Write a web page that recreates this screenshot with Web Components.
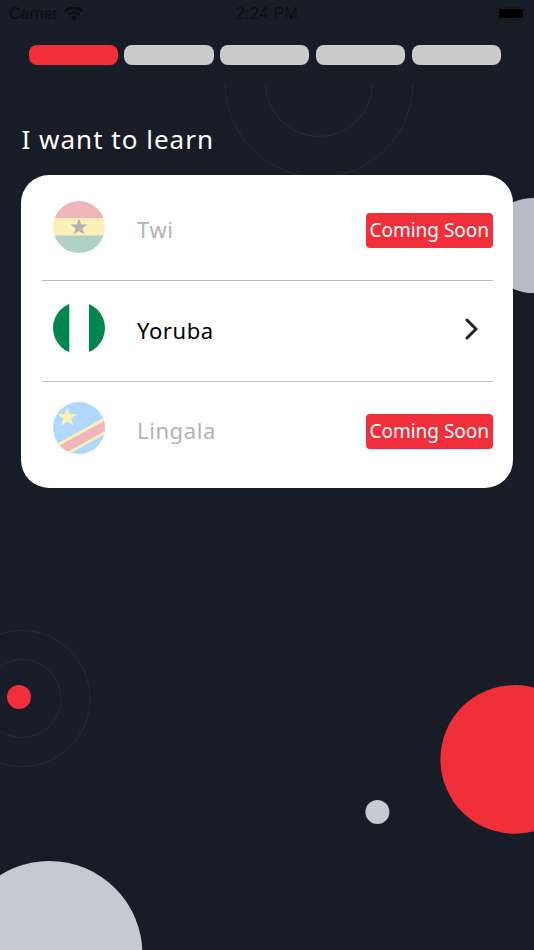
<!DOCTYPE html>
<html>
<head>
<meta charset="utf-8">
<title>I want to learn</title>
<style>
  html, body { margin: 0; padding: 0; background: #181c26; }
</style>
</head>
<body>
<learn-screen>
  <status-bar></status-bar>
  <progress-steps steps="5" active="0"></progress-steps>
  <h-title>I want to learn</h-title>
  <language-card>
    <language-row name="Twi" flag="ghana" soon></language-row>
    <language-row name="Yoruba" flag="nigeria"></language-row>
    <language-row name="Lingala" flag="congo" soon></language-row>
  </language-card>
</learn-screen>

<script>
class LearnScreen extends HTMLElement {
  constructor() {
    super();
    this.attachShadow({mode: 'open'}).innerHTML = `
      <style>
        :host { display: block; position: relative; width: 534px; height: 950px; overflow: hidden; background: #181c26; font-family: "Noto Sans", sans-serif; }
        .bg { position: absolute; left: 0; top: 0; width: 534px; height: 950px; }
        .content { position: relative; display: flex; flex-direction: column; }
      </style>
      <svg class="bg" viewBox="0 0 534 950">
        <g fill="none" stroke="#262a34" stroke-width="1">
          <path d="M225 83a94 94 0 0 0 188 0"/>
          <path d="M265.5 83a53.5 53.5 0 0 0 107 0"/>
          <circle cx="22" cy="698.5" r="68"/>
          <circle cx="22" cy="698.5" r="39"/>
        </g>
        <circle cx="533" cy="245.5" r="47.5" fill="#b7bbc5"/>
        <circle cx="19" cy="697" r="12" fill="#f02f3a"/>
        <circle cx="514.7" cy="759.4" r="74.3" fill="#f02f3a"/>
        <circle cx="377.4" cy="812" r="12" fill="#c5c9d1"/>
        <circle cx="49.4" cy="954" r="93" fill="#c5c9d1"/>
      </svg>
      <div class="content"><slot></slot></div>
    `;
  }
}
customElements.define('learn-screen', LearnScreen);

class StatusBar extends HTMLElement {
  constructor() {
    super();
    this.attachShadow({mode: 'open'}).innerHTML = `
      <style>
        :host { display: flex; align-items: center; justify-content: space-between; position: relative; height: 27px; padding: 0 7px 0 9px; color: #0c0e13; font: 16px "Liberation Sans", sans-serif; }
        .left { display: flex; align-items: center; gap: 6px; }
        .time { position: absolute; left: 0; right: 0; text-align: center; letter-spacing: .4px; }
        svg { display: block; }
      </style>
      <div class="left">
        <span>Carrier</span>
        <svg width="20" height="14" viewBox="0 0 18 13"><path fill="#0c0e13" d="M9 13 6 9.6a4.4 4.4 0 0 1 6 0zM4.4 8 2.9 6.3a9 9 0 0 1 12.2 0L13.6 8a6.8 6.8 0 0 0-9.2 0zM1.6 4.9 0 3.2a13.2 13.2 0 0 1 18 0l-1.6 1.7a11 11 0 0 0-14.8 0z"/></svg>
      </div>
      <span class="time">2:24 PM</span>
      <svg width="30" height="13" viewBox="0 0 30 13"><rect x=".5" y=".5" width="27" height="12" rx="3.5" fill="none" stroke="#0c0e13" stroke-opacity=".35"/><rect x="2" y="2" width="24" height="9" rx="2" fill="#000"/><path d="M28.5 4.5c.8.3 1.3 1.1 1.3 2s-.5 1.7-1.3 2z" fill="#0c0e13" fill-opacity=".5"/></svg>
    `;
  }
}
customElements.define('status-bar', StatusBar);

class ProgressSteps extends HTMLElement {
  constructor() {
    super();
    const n = +this.getAttribute('steps');
    const active = +this.getAttribute('active');
    let bars = '';
    for (let i = 0; i < n; i++) bars += `<div class="bar${i == active ? ' on' : ''}"></div>`;
    this.attachShadow({mode: 'open'}).innerHTML = `
      <style>
        :host { display: flex; gap: 6.5px; margin: 18px 33px 0 28.5px; }
        .bar { flex: 1; height: 19.5px; border-radius: 8px; background: #cbcbcb; }
        .bar.on { background: #f02f3a; }
      </style>
      ${bars}
    `;
  }
}
customElements.define('progress-steps', ProgressSteps);

class HTitle extends HTMLElement {
  constructor() {
    super();
    this.attachShadow({mode: 'open'}).innerHTML = `
      <style>
        :host { display: block; margin: 55px 0 0 21.5px; height: 38px; line-height: 38px; color: #fff; font-size: 26px; letter-spacing: 1px; }
      </style>
      <slot></slot>
    `;
  }
}
customElements.define('h-title', HTitle);

class LanguageCard extends HTMLElement {
  constructor() {
    super();
    this.attachShadow({mode: 'open'}).innerHTML = `
      <style>
        :host { display: flex; flex-direction: column; width: 492px; height: 313px; margin: 17px 0 0 21px; padding: 6px 20.5px; box-sizing: border-box; background: #fff; border-radius: 28px; }
        ::slotted(language-row:not(:last-child)) { border-bottom: 1px solid #bdbdbd; }
      </style>
      <slot></slot>
    `;
  }
}
customElements.define('language-card', LanguageCard);

const FLAGS = {
  ghana: `
    <rect width="52" height="17" fill="#ce1126"/><rect y="17" width="52" height="17.4" fill="#fcd116"/><rect y="34.4" width="52" height="17.6" fill="#006b3f"/>
    <polygon fill="#000" points="26,17.5 28.1,23.6 34.6,23.6 29.4,27.5 31.3,33.6 26,29.9 20.7,33.6 22.6,27.5 17.4,23.6 23.9,23.6"/>`,
  nigeria: `
    <rect width="52" height="52" fill="#fff"/><rect width="16.3" height="52" fill="#008751"/><rect x="36" width="16" height="52" fill="#008751"/>`,
  congo: `
    <rect width="52" height="52" fill="#007fff"/>
    <polygon fill="#f7d618" points="0,44 52,15.3 52,32 0,61"/>
    <polygon fill="#ce1021" points="0,47 52,18.5 52,29 0,58"/>
    <polygon fill="#f7d618" points="14.3,5 16.7,12 24.3,12 18.2,16.5 20.5,24 14.3,19.5 8.1,24 10.4,16.5 4.3,12 11.9,12"/>`
};

class LanguageRow extends HTMLElement {
  constructor() {
    super();
    const soon = this.hasAttribute('soon');
    this.attachShadow({mode: 'open'}).innerHTML = `
      <style>
        :host { display: flex; flex: 1; align-items: center; box-sizing: border-box; padding-left: 11.5px; }
        svg.flag { flex: none; width: 52px; height: 52px; border-radius: 50%; margin-bottom: 7px; }
        .off { opacity: .3; }
        .name { margin-left: 32px; flex: 1; font-size: 22px; letter-spacing: .6px; color: #000; margin-bottom: 3px; }
        .name.off { opacity: 1; color: #b3b3b3; }
        .soon { background: #f02f3a; color: #fff; border-radius: 4px; width: 126.5px; height: 35px; line-height: 35px; text-align: center; font-size: 19px; white-space: nowrap; }
        .chev { margin: 0 14px 5px 0; display: block; }
      </style>
      <svg class="flag ${soon ? 'off' : ''}" viewBox="0 0 52 52">${FLAGS[this.getAttribute('flag')]}</svg>
      <span class="name ${soon ? 'off' : ''}">${this.getAttribute('name')}</span>
      ${soon ? '<span class="soon">Coming Soon</span>' : '<svg class="chev" width="14" height="22" viewBox="0 0 14 22"><path d="M2 2 11 11 2 20" fill="none" stroke="#222" stroke-width="3" stroke-linecap="round" stroke-linejoin="round"/></svg>'}
    `;
  }
}
customElements.define('language-row', LanguageRow);
</script>
</body>
</html>
